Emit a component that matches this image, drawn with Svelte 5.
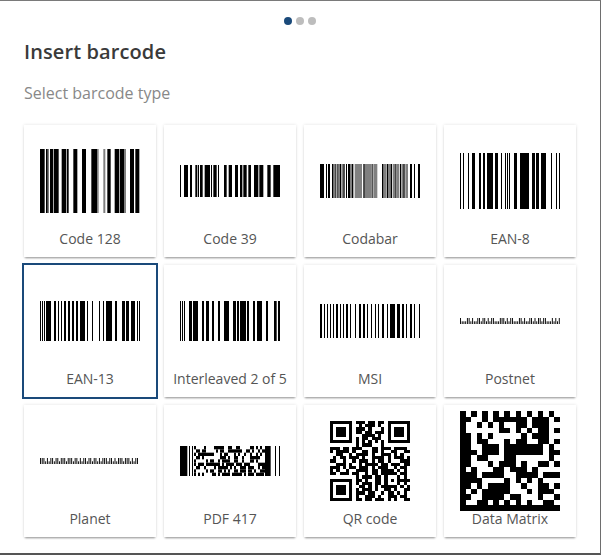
<script>
  const n = (s) => s.trim().split(/\s+/).map((p) => p.split('-').map(Number));
  const cells = (rows) => {
    const out = [];
    rows.forEach((r, y) => [...r].forEach((c, x) => { if (c === '#') out.push([x, y]); }));
    return out;
  };
  const post = (s, tall, short) =>
    [...s].map((c, i) => ({ x: i * 5.2, w: 2.8, y: c === 'T' ? 0 : tall - short, h: c === 'T' ? tall : short }));

  const qr = cells([
    '#######.###.##.##.#######','#.....#..#.###.#..#.....#','#.###.#.###.#...#.#.###.#','#.###.#.##.##.###.#.###.#',
    '#.###.#...####.#..#.###.#','#.....#.#.##.###..#.....#','#######.#.#.#.#.#.#######','........#.###...#........',
    '###.##.###...##.###.####.','#.####.#..##.##.#..##..##','..##..#.####.#..###.#.#..','.#.##.###.#..####.#.###.#',
    '##..#..#.###.#.##.#...###','..###.#..#.####.##.###.##','###.#.##.###.#.###..#.##.','#.#..#..####.##.####.#.#.',
    '##.###.##..#.##.#####.##.','........#.###.##.#...#.#.','#######.##.#..##.#.#.####','#.....#.#.###.##.#...#.#.',
    '#.###.#..##.#.#.#####.#.#','#.###.#.#.###.#..##.#..##','#.###.#.###.##..#.##.#.#.','#.....#.#..###.#..###.##.',
    '#######.##.##.###.#.#..##'
  ]);

  const dm = cells([
    '#.#.#.#.#.#.#.#.#.',
    '##..#.######.###.#',
    '#..#.#.#..##.###..',
    '#......##.#.#.##.#',
    '##.#.#.....#.###..',
    '##.##...#.##..##.#',
    '##..###.#######.#.',
    '###.###.#######.##',
    '##.##...##......#.',
    '##...#.###.#..##.#',
    '#.#...##.###.#....',
    '###.####..####.###',
    '####....#.#.#.#...',
    '##.#.####..#..##.#',
    '#.#.#####...#.###.',
    '##..####.##...#..#',
    '#..##.#.#.#.#..##.',
    '##################'
  ]);

  let seed = 41;
  const rnd = () => (seed = (seed * 1103 + 12345) % 65536) / 65536;
  const pdfCells = [];
  for (let y = 0; y < 9; y++)
    for (let x = 0; x < 36; x++)
      if (rnd() > 0.44) pdfCells.push({ x: 42 + x * 6, y: y * 10, w: 6, h: 10 });

  const bars = (h, black, gray = '') => ({
    h,
    items: [
      ...(gray ? n(gray).map(([a, b]) => ({ x: a, y: 0, w: b - a, h: h * 3, g: true })) : []),
      ...n(black).map(([a, b]) => ({ x: a, y: 0, w: b - a, h: h * 3 }))
    ]
  });
  const cards = [
    { label: 'Code 128', ...bars(64, '0-14 18-23 30-40 42-56 65-78 80-86 100-112 126-138 154-171 202-212 224-238 240-252 270-282 286-298', '23-27 171-176 190-196 252-258') },
    { label: 'Code 39', ...bars(32, '0-3 12-24 30-36 46-52 54-57 60-68 74-90 93-96 100-110 114-117 132-140 146-156 165-174 180-187 190-200 205-213 222-235 238-250 262-272 280-300') },
    { label: 'Codabar', ...bars(34, '0-12 18-21 24-30 36-40 46-49 52-55 60-63 70-74 78-81 84-90 96-100 130-134 155-158 186-190 200-204 212-216 226-229 240-243 250-254 270-276 282-285 294-300', '40-46 55-60 64-70 90-96 104-126 134-154 160-172 190-198 204-212 218-226 230-238 244-250 256-264') },
    { label: 'EAN-8', ...bars(56, '0-3 9-12 24-27 36-45 57-63 69-75 81-99 105-114 123-126 135-138 141-144 147-150 162-171 180-207 216-225 228-237 243-258 273-276 288-291 297-300') },
    { label: 'EAN-13', sel: true, ...bars(40, '0-3 6-9 12-15 18-33 42-48 54-57 63-66 72-78 84-90 96-102 108-114 120-135 141-144 156-159 177-180 189-192 198-216 225-231 246-255 258-267 273-285 291-294 297-300') },
    { label: 'Interleaved 2 of 5', ...bars(40, '0-3 6-9 12-15 27-36 39-54 66-72 78-87 96-102 114-120 132-147 159-168 171-177 180-198 201-207 219-225 231-246 258-264 282-290 294-300') },
    { label: 'MSI', ...bars(34, '0-6 12-15 21-24 30-33 39-42 48-54 60-63 69-72 78-84 90-93 105-108 117-123 129-135 141-144 153-156 165-168 174-177 186-192 201-204 210-225 231-240 246-252 258-261 270-276 282-285 297-300') },
    { label: 'Postnet', post: post('TsssTTsTssTTsTTsTsTTsssTTTsTsTTsssTTsTssTTsTsTTsTTsssTsTsT', 6.3, 3) },
    { label: 'Planet', post: post('TTTsTsTTsTTsTTTsTTTsTTsTsTTsTTsTTsTsTTTsTTsTsTTTsTTTsTsTT', 6.3, 3) },
    { label: 'PDF 417', pdf: pdfCells, ...bars(30, '0-22 27-30 36-39 255-272 285-288 297-300') },
    { label: 'QR code', matrix: qr, size: 25, px: 80 },
    { label: 'Data Matrix', matrix: dm, size: 18, px: 100 }
  ];
</script>

<div class="panel">
  <div class="dots"><span class="dot on"></span><span class="dot"></span><span class="dot"></span></div>
  <h1>Insert barcode</h1>
  <h2>Select barcode type</h2>
  <div class="grid">
    {#each cards as c}
      <div class="card" class:sel={c.sel}>
        <div class="art">
          {#if c.matrix}
            <svg class="crisp" width={c.px} height={c.px} viewBox="0 0 {c.size} {c.size}">
              {#each c.matrix as [x, y]}<rect {x} {y} width="1" height="1" />{/each}
            </svg>
          {:else if c.post}
            <svg width="100" height="6.3" viewBox="0 0 300 6.3" preserveAspectRatio="none">
              {#each c.post as b}<rect x={b.x} y={b.y} width={b.w} height={b.h} />{/each}
            </svg>
          {:else}
            <svg width="100" height={c.h} viewBox="0 0 300 {c.h * 3}">
              {#each c.items as b}<rect x={b.x} y={b.y} width={b.w} height={b.h} class:g={b.g} />{/each}
              {#if c.pdf}{#each c.pdf as b}<rect x={b.x} y={b.y} width={b.w} height={b.h} />{/each}{/if}
            </svg>
          {/if}
        </div>
        <div class="label">{c.label}</div>
      </div>
    {/each}
  </div>
</div>

<style>
  :global(body) { margin: 0; background: #fff; }
  .panel {
    box-sizing: border-box;
    width: 601px;
    height: 555px;
    padding: 16px 0 0 24px;
    border-top: 1px solid #7a7a7a;
    border-right: 1px solid #6e6e6e;
    border-bottom: 2px solid #555;
    font-family: "Open Sans", sans-serif;
    background: #fff;
  }
  .dots { display: flex; justify-content: center; gap: 4px; width: 552px; }
  .dot { width: 8px; height: 8px; border-radius: 50%; background: #bdbdbd; }
  .dot.on { background: #1a4a7a; }
  h1 {
    margin: 13px 0 0;
    font-size: 20px;
    line-height: 28px;
    font-weight: 600;
    letter-spacing: 0.1px;
    color: #3a3a3a;
  }
  h2 {
    margin: 15px 0 0;
    font-size: 16px;
    line-height: 24px;
    font-weight: 400;
    color: #888;
  }
  .grid {
    display: grid;
    grid-template-columns: repeat(4, 132px);
    grid-auto-rows: 132px;
    gap: 8px;
    margin-top: 20px;
  }
  .card {
    background: #fff;
    box-shadow: 0 2px 2px -1px rgba(0, 0, 0, 0.4), 0 0 3px rgba(0, 0, 0, 0.12);
    display: flex;
    flex-direction: column;
  }
  .card.sel { box-shadow: 0 0 0 2px #1a4a7a; }
  .art { height: 112px; display: flex; align-items: center; justify-content: center; flex: none; }
  svg { display: block; }
  svg.crisp { shape-rendering: crispEdges; }
  rect.g { fill: #808080; }
  .label {
    text-align: center;
    font-size: 14px;
    line-height: 16px;
    margin-top: -6px;
    color: #555;
  }
</style>
